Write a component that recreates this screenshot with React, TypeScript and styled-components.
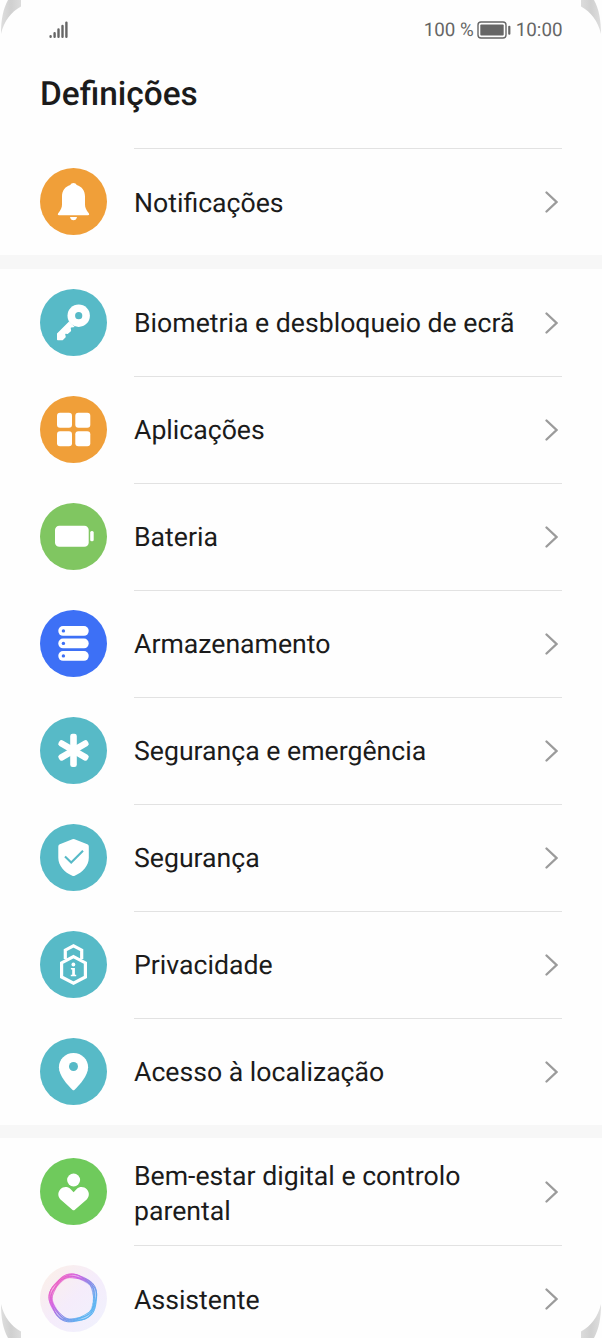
import React from 'react';
import styled, { createGlobalStyle } from 'styled-components';

const GlobalStyle = createGlobalStyle`
  * { box-sizing: border-box; }
  body { margin: 0; background: #fefefe; overflow: hidden; }
`;

const Screen = styled.main`
  position: relative;
  width: 602px;
  height: 1338px;
  overflow: hidden;
  background: #fefefe;
  color: #1b1b1b;
  font-family: Roboto, sans-serif;
  text-rendering: geometricPrecision;
`;

const StatusBar = styled.header`
  display: flex;
  align-items: center;
  height: 59px;
  padding: 0 39.5px 0 49px;
  color: #666;
  font-size: 18.8px;
`;

const StatusRight = styled.div`
  display: flex;
  align-items: center;
  gap: 4px;
  margin-left: auto;
`;

const BatteryGauge = styled.svg`
  width: 34px;
  height: 18px;
  margin: 0 1px 0 -1px;
`;

const Title = styled.h1`
  height: 89px;
  margin: 0;
  padding: 16px 40px 0;
  font-size: 33.4px;
  line-height: 40px;
  font-weight: 500;
`;

const Group = styled.section<{ $gap: number }>`
  border-top: ${p => p.$gap}px solid #f7f7f7;
`;

const Row = styled.div`
  display: flex;
  align-items: center;
  gap: 27px;
  height: 107px;
  padding: 0 40px;
`;

const Badge = styled.svg`
  flex: none;
  width: 67px;
  height: 67px;
`;

const RowBody = styled.div<{ $line?: boolean }>`
  display: flex;
  flex: 1;
  align-items: center;
  justify-content: space-between;
  height: 107px;
  border-top: 1px solid ${p => (p.$line ? '#e2e2e2' : 'transparent')};
`;

const Label = styled.span<{ $drop: number }>`
  padding-top: ${p => p.$drop}px;
  font-size: 26.65px;
  line-height: 35px;
  white-space: pre;
`;

const Chevron = styled.svg`
  flex: none;
  width: 13px;
  height: 22px;
  margin: 0 4px 1px 0;
`;

const Corner = styled.svg<{ $right?: boolean; $bottom?: boolean }>`
  position: absolute;
  ${p => (p.$bottom ? 'bottom: 0;' : 'top: 0;')}
  ${p => (p.$right ? 'right: 0;' : 'left: 0;')}
  width: 22px;
  height: 36px;
  transform: scale(${p => (p.$right ? -1 : 1)}, ${p => (p.$bottom ? -1 : 1)});
`;

const ORANGE = '#f09f39';
const TEAL = '#57bac7';
const LIME = '#80c661';
const BLUE = '#3d70f6';
const GREEN = '#6fca5c';

const Bell = () => (
  <>
    <path d="M33.500 15c-1.500 0-2.700.8-3.200 2.100C25 18.700 22 23 22 28.500V36.500c0 3-1.200 5.500-3.800 8.800-.7 1-.4 2 .8 2h29c1.200 0 1.500-1 .8-2C46.200 42 45 39.500 45 36.500v-8c0-5.500-3-9.800-8.300-11.400C36.200 15.800 35 15 33.500 15z" />
    <path d="M30 49h7c-.3 2-1.700 3.300-3.500 3.300S30.300 51 30 49z" />
  </>
);

const Key = () => (
  <>
    <path d="M29 32.500 17 44.500V50.500q0 .8.8.8H22q.7 0 1.200-.5l2.200-2.200q.5-.5.300-1.200l-.5-2.200q-.1-.5.500-.5l2 .2 2.900-2.500q.6-.5.500-1.200l-.4-2.200q0-.6.600-.6l3.500-.5z" />
    <circle cx="38.700" cy="26.700" r="11.200" />
    <circle cx="38.700" cy="26.700" r="3.600" fill={TEAL} />
  </>
);

const Tiles = () => (
  <>
    {[17, 35.300].map(x =>
      [16.700, 35.300].map(y => <rect key={`${x}-${y}`} x={x} y={y} width="15" height="15" rx="3" />)
    )}
  </>
);

const BatteryIcon = () => (
  <>
    <rect x="15" y="22.700" width="33.700" height="21" rx="4.300" />
    <rect x="50.200" y="28" width="3.500" height="10.200" rx="1.500" />
  </>
);

const Storage = () => (
  <>
    {[16, 28.500, 41].map(y => (
      <React.Fragment key={y}>
        <rect x="18.300" y={y} width="30.400" height="9.800" rx="4.700" />
        <circle cx="23.400" cy={y + 4.900} r="1.700" fill={BLUE} />
      </React.Fragment>
    ))}
  </>
);

const Asterisk = () => (
  <>
    {[0, 60, 120].map(a => (
      <rect key={a} x="30.200" y="16.700" width="6.600" height="33.400" rx="2.400" transform={`rotate(${a} 33.500 33.400)`} />
    ))}
  </>
);

const Shield = () => (
  <>
    <path d="M32.400 15.300q1.100-.5 2.200 0l12.700 4.900q1.500.6 1.500 2.200v11.400c0 8-6.200 14.700-14.100 17.900q-1.200.5-2.400 0C24.500 48.500 18.300 41.800 18.300 33.800V22.400q0-1.600 1.500-2.200z" />
    <path d="m25 32.500 6.200 6L43 26.700" fill="none" stroke={TEAL} strokeWidth="2.100" />
  </>
);

const PrivacyLock = () => (
  <>
    <g fill="none" stroke="#fff" strokeWidth="3.200">
      <path d="M25.300 28V19.200l8.200-4.400 8.200 4.400V28" />
      <path d="m33.500 25.600 11.900 6.300V46l-11.900 6.100L21.600 46V31.900z" />
    </g>
    <circle cx="33.400" cy="33.500" r="1.900" />
    <path d="M30.900 37h4v6.700h1.300v1.500h-5.400v-1.500h1.400v-5.200h-1.300z" />
  </>
);

const Pin = () => (
  <>
    <path d="M33.500 15c-8.200 0-14.600 6.300-14.600 14.200 0 8.300 8.500 17.500 13.500 22.600q1.100 1 2.200 0c5-5.100 13.500-14.300 13.500-22.600C48.100 21.300 41.700 15 33.500 15z" />
    <circle cx="33.500" cy="28.500" r="4.500" fill={TEAL} />
  </>
);

const HeartPerson = () => (
  <>
    <circle cx="33.600" cy="22" r="6.500" />
    <path d="M33.600 34.200 30.500 31c-3-2.900-7.400-2.500-10.100.2-2.800 2.900-2.800 7.300.1 10.300l11.800 10.300q1.300 1.100 2.600 0l11.800-10.300c2.900-3 2.900-7.400.1-10.300-2.700-2.700-7.100-3.100-10.100-.2z" />
  </>
);

const wave = (radius: number, depth: number, phase: number) =>
  Array.from({ length: 91 }, (_, i) => {
    const t = (i * Math.PI) / 45;
    const r = radius + depth * Math.cos(5 * t + phase);
    return `${i ? 'L' : 'M'}${(33.300 + r * Math.cos(t)).toFixed(2)} ${(33.200 + r * Math.sin(t)).toFixed(2)}`;
  }).join('') + 'Z';

const Assistant = () => (
  <>
    <defs>
      <linearGradient id="halo" x1="0" y1="0" x2="1" y2="1">
        <stop offset="0" stopColor="#fcf0e6" />
        <stop offset=".5" stopColor="#f5ecfb" />
        <stop offset="1" stopColor="#eff2fd" />
      </linearGradient>
      <linearGradient id="ring" x1=".1" y1=".2" x2=".8" y2=".8">
        <stop offset="0" stopColor="#e83bb9" />
        <stop offset=".3" stopColor="#c63fe0" />
        <stop offset=".6" stopColor="#6a68e0" />
        <stop offset="1" stopColor="#35a4ef" />
      </linearGradient>
    </defs>
    <circle cx="33.500" cy="33.500" r="33.500" fill="url(#halo)" />
    <g fill="none" stroke="url(#ring)">
      <path d={wave(22.200, 0.600, 2.600)} strokeWidth="4.200" opacity=".4" />
      <g strokeWidth=".9" opacity=".7">
        <path d={wave(23.700, 0.800, 2.600)} />
        <path d={wave(23, 1, 1.600)} />
        <path d={wave(22.200, 1, 3.700)} />
        <path d={wave(21.300, 0.800, 2.500)} />
        <path d={wave(20.900, 0.800, 4.100)} />
      </g>
    </g>
  </>
);

type Item = { label: string; color: string; icon: React.FC };
type ItemGroup = { gap: number; drop: number; items: Item[] };

const groups: ItemGroup[] = [
  { gap: 0, drop: 2, items: [{ label: 'Notificações', color: ORANGE, icon: Bell }] },
  {
    gap: 14,
    drop: 0,
    items: [
      { label: 'Biometria e desbloqueio de ecrã', color: TEAL, icon: Key },
      { label: 'Aplicações', color: ORANGE, icon: Tiles },
      { label: 'Bateria', color: LIME, icon: BatteryIcon },
      { label: 'Armazenamento', color: BLUE, icon: Storage },
      { label: 'Segurança e emergência', color: TEAL, icon: Asterisk },
      { label: 'Segurança', color: TEAL, icon: Shield },
      { label: 'Privacidade', color: TEAL, icon: PrivacyLock },
      { label: 'Acesso à localização', color: TEAL, icon: Pin },
    ],
  },
  {
    gap: 13,
    drop: 3,
    items: [
      { label: 'Bem-estar digital e controlo\nparental', color: GREEN, icon: HeartPerson },
      { label: 'Assistente', color: 'none', icon: Assistant },
    ],
  },
];

const CornerShade = ({ id, right, bottom }: { id: string; right?: boolean; bottom?: boolean }) => (
  <Corner $right={right} $bottom={bottom} viewBox="0 0 22 36">
    <defs>
      <linearGradient id={id} x1="0" y1="0" x2="1" y2="0">
        <stop offset="0" stopColor="#dedede" />
        <stop offset=".5" stopColor="#d0d0d0" />
        <stop offset="1" stopColor="#dcdcdc" />
      </linearGradient>
    </defs>
    <path d="M8 0H21V6.500C11 12 4 21 1 34 1 20 3 9 8 0z" fill={`url(#${id})`} />
  </Corner>
);

export default function App() {
  return (
    <>
      <GlobalStyle />
      <Screen>
        <StatusBar>
          <svg width="20" height="18" viewBox="0 0 20 18" stroke="#666" strokeWidth="2.400" strokeLinecap="round">
            <path d="M1.600 15.300v.4M5.600 12.300v3.400M9.500 8.500v7.200M13.500 5v10.700M17.400 1.600v14.100" />
          </svg>
          <StatusRight>
            <span>100 %</span>
            <BatteryGauge viewBox="0 0 34 18">
              <rect x="1" y="1" width="28" height="16" rx="3" fill="none" stroke="#666" strokeWidth="1.400" />
              <rect x="3.300" y="3.500" width="23.400" height="11" rx="1" fill="#666" />
              <rect x="31.200" y="4.700" width="2.200" height="9" rx="1" fill="#666" />
            </BatteryGauge>
            <span>10:00</span>
          </StatusRight>
        </StatusBar>
        <Title>Definições</Title>
        {groups.map(({ gap, drop, items }, g) => (
          <Group key={g} $gap={gap}>
            {items.map(({ label, color, icon: Icon }, i) => (
              <Row key={label}>
                <Badge viewBox="0 0 67 67" fill="#fff">
                  <circle cx="33.500" cy="33.500" r="33.500" fill={color} />
                  <Icon />
                </Badge>
                <RowBody $line={g === 0 || i > 0}>
                  <Label $drop={drop}>{label}</Label>
                  <Chevron viewBox="0 0 13 22" fill="none" stroke="#9b9b9b" strokeWidth="2.300" strokeLinecap="round">
                    <path d="m1.500 1.500 10 9.500-10 9.500" />
                  </Chevron>
                </RowBody>
              </Row>
            ))}
          </Group>
        ))}
        <CornerShade id="shade-tl" />
        <CornerShade id="shade-tr" right />
        <CornerShade id="shade-bl" bottom />
        <CornerShade id="shade-br" right bottom />
      </Screen>
    </>
  );
}
